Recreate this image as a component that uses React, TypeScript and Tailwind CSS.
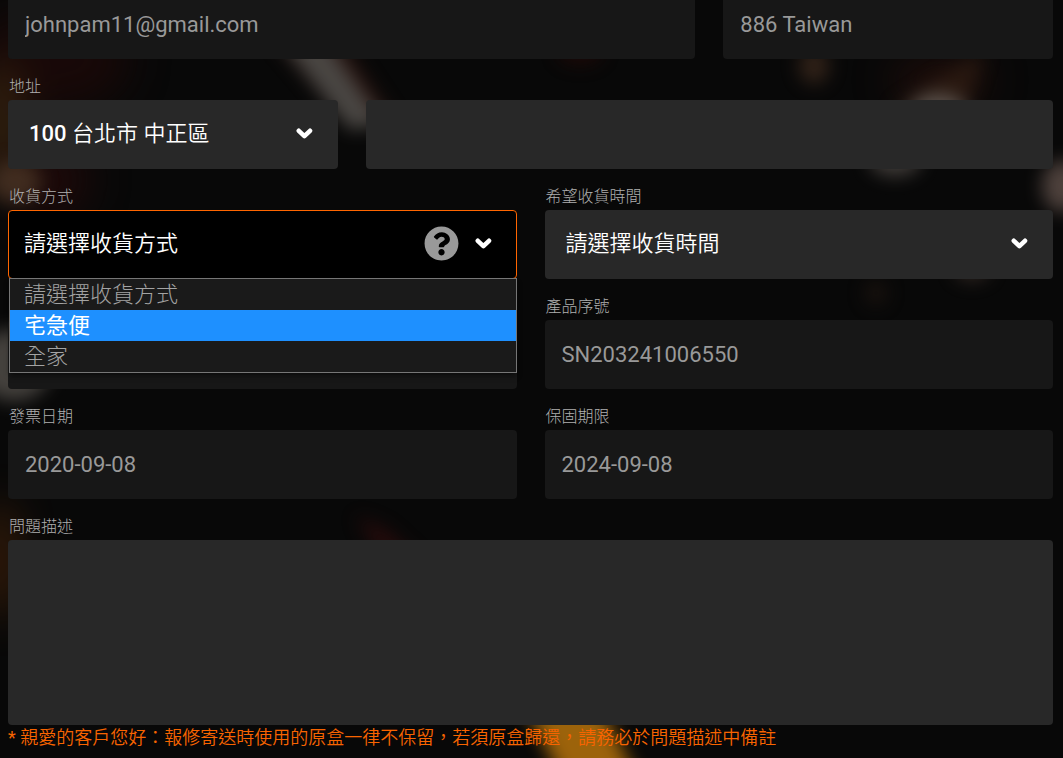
import { useState } from "react";
import type { ReactNode } from "react";
import { FaQuestionCircle } from "react-icons/fa";

const baseField = "block h-[69px] w-full rounded text-[22px] outline-none";
const readOnlyField = `${baseField} bg-[#171717] px-[17px] text-[#999]`;
const selectFont =
  "font-[Roboto,'Noto_Sans_CJK_TC_DemiLight','Noto_Sans_CJK_TC',sans-serif] font-medium";
const selectField = `${baseField} ${selectFont} appearance-none bg-[#282828] pr-14 pl-[21px] pb-0.5 text-white`;

function Field({ id, label, children }: { id: string; label: string; children: ReactNode }) {
  return (
    <div className="min-w-0">
      <label
        htmlFor={id}
        className="flex h-[41px] items-end pb-px pl-px text-[16px] leading-6 font-light text-[#b0b0b0]"
      >
        {label}
      </label>
      {children}
    </div>
  );
}

function Chevron() {
  return (
    <svg
      aria-hidden="true"
      viewBox="0 0 18 18"
      className="pointer-events-none absolute top-6 right-6 size-[18px] text-white"
    >
      <path
        d="M2.8 6.8 L8.4 12.1 L14 6.8"
        fill="none"
        stroke="currentColor"
        strokeWidth="4.6"
        strokeLinecap="round"
        strokeLinejoin="round"
      />
    </svg>
  );
}

function Backdrop() {
  return (
    <svg
      aria-hidden="true"
      className="pointer-events-none absolute inset-0 h-full w-full"
      viewBox="0 0 1063 758"
      preserveAspectRatio="none"
    >
      <defs>
        <filter
          id="soft"
          filterUnits="userSpaceOnUse"
          x="-80"
          y="-80"
          width="1223"
          height="918"
          colorInterpolationFilters="sRGB"
        >
          <feGaussianBlur stdDeviation="9" />
        </filter>
        <filter
          id="softer"
          filterUnits="userSpaceOnUse"
          x="-80"
          y="-80"
          width="1223"
          height="918"
          colorInterpolationFilters="sRGB"
        >
          <feGaussianBlur stdDeviation="20" />
        </filter>
      </defs>
      <g filter="url(#softer)" opacity="0.75">
        <ellipse cx="50" cy="60" rx="80" ry="50" fill="#1e0908" />
        <ellipse cx="50" cy="180" rx="40" ry="40" fill="#240a0a" />
        <ellipse cx="0" cy="120" rx="20" ry="60" fill="#4a2e12" />
        <ellipse cx="0" cy="560" rx="14" ry="60" fill="#5a2c0a" />
        <ellipse cx="940" cy="80" rx="50" ry="20" fill="#2a100c" />
      </g>
      <g filter="url(#soft)" opacity="0.8">
        <path d="M265 30 L335 30 L395 120 L350 130 Z" fill="#2d1510" />
        <path d="M280 40 L325 40 L384 124 L350 130 Z" fill="#5a5652" />
        <ellipse cx="15" cy="182" rx="26" ry="22" fill="#4a3425" />
        <ellipse cx="14" cy="365" rx="38" ry="36" fill="#54504b" />
        <ellipse cx="580" cy="52" rx="22" ry="12" fill="#220908" />
        <ellipse cx="814" cy="66" rx="15" ry="18" fill="#3c291d" />
        <path d="M890 110 L935 80 L985 50 L966 110 Z" fill="#2e1c12" />
        <ellipse cx="938" cy="112" rx="28" ry="18" fill="#6c645e" />
        <ellipse cx="895" cy="160" rx="26" ry="16" fill="#504a46" />
        <ellipse cx="1062" cy="186" rx="20" ry="26" fill="#60504a" />
        <ellipse cx="972" cy="268" rx="18" ry="13" fill="#382d27" />
        <ellipse cx="876" cy="293" rx="11" ry="12" fill="#1e1510" />
        <path d="M356 516 L385 528 L420 560 L380 558 Z" fill="#2c0c0c" />
        <path d="M522 700 L598 700 L640 785 L565 785 Z" fill="#c27a0c" />
      </g>
    </svg>
  );
}

const methods = ["請選擇收貨方式", "宅急便", "全家"];

export default function App() {
  const [method, setMethod] = useState(methods[0]);
  const [active, setActive] = useState(methods[1]);

  return (
    <main
      lang="zh-TW"
      className="relative min-h-screen overflow-hidden bg-[#080808] pr-2.5 pl-2 font-[Roboto,'Noto_Sans_CJK_TC',sans-serif]"
    >
      <Backdrop />
      <form className="relative -mt-2.5">
        <div className="grid grid-cols-3 gap-x-7">
          <input
            className={`${readOnlyField} col-span-2`}
            type="email"
            aria-label="Email"
            readOnly
            value="johnpam11@gmail.com"
          />
          <input className={readOnlyField} aria-label="國家" readOnly value="886 Taiwan" />
        </div>

        <div className="grid grid-cols-3 items-end gap-x-7">
          <Field id="district" label="地址">
            <div className="relative">
              <select id="district" className={selectField}>
                <option>100 台北市 中正區</option>
              </select>
              <Chevron />
            </div>
          </Field>
          <input
            className={`${baseField} col-span-2 bg-[#282828] px-[17px] text-white`}
            aria-label="地址"
          />
        </div>

        <div className="grid grid-cols-2 gap-x-7">
          <Field id="method" label="收貨方式">
            <div className="relative z-10">
              <select
                id="method"
                value={method}
                onChange={(e) => setMethod(e.target.value)}
                className={`${baseField} ${selectFont} appearance-none border border-[#ff6600] bg-black pr-24 pb-0.5 pl-[15px] text-white`}
              >
                {methods.map((m) => (
                  <option key={m}>{m}</option>
                ))}
              </select>
              <button
                type="button"
                aria-label="說明"
                className="absolute top-4 right-[58px] text-[#999]"
              >
                <FaQuestionCircle className="size-[35px]" />
              </button>
              <Chevron />
              <ul
                role="listbox"
                aria-label="收貨方式"
                className="absolute top-[68px] right-0 left-px border border-[#767676] bg-[#1a1a1a] text-[22px] leading-[31px] font-light shadow-md shadow-black/40"
              >
                {methods.map((m) => (
                  <li
                    key={m}
                    role="option"
                    aria-selected={m === active}
                    onMouseEnter={() => setActive(m)}
                    onClick={() => setMethod(m)}
                    className={
                      m === active
                        ? "h-[31px] bg-[#1e90ff] pl-3.5 font-normal text-white"
                        : "h-[31px] pl-3.5 text-[#a3a3a3]"
                    }
                  >
                    {m}
                  </li>
                ))}
              </ul>
            </div>
          </Field>
          <Field id="time" label="希望收貨時間">
            <div className="relative">
              <select id="time" className={selectField}>
                <option>請選擇收貨時間</option>
              </select>
              <Chevron />
            </div>
          </Field>
        </div>

        <div className="grid grid-cols-2 items-end gap-x-7">
          <input className={readOnlyField} aria-label="產品型號" readOnly />
          <Field id="serial" label="產品序號">
            <input id="serial" className={readOnlyField} readOnly value="SN203241006550" />
          </Field>
        </div>

        <div className="grid grid-cols-2 gap-x-7">
          <Field id="invoice" label="發票日期">
            <input id="invoice" className={readOnlyField} readOnly value="2020-09-08" />
          </Field>
          <Field id="warranty" label="保固期限">
            <input id="warranty" className={readOnlyField} readOnly value="2024-09-08" />
          </Field>
        </div>

        <Field id="issue" label="問題描述">
          <textarea
            id="issue"
            className="block h-[185px] w-full resize-none rounded bg-[#282828] p-4 text-[22px] text-white outline-none"
          />
        </Field>
        <p className="font-[Roboto,'Noto_Sans_CJK_TC_DemiLight','Noto_Sans_CJK_TC',sans-serif] text-[18px] leading-[26px] text-[#f86400]">
          * 親愛的客戶您好：報修寄送時使用的原盒一律不保留，若須原盒歸還，請務必於問題描述中備註
        </p>
      </form>
    </main>
  );
}
